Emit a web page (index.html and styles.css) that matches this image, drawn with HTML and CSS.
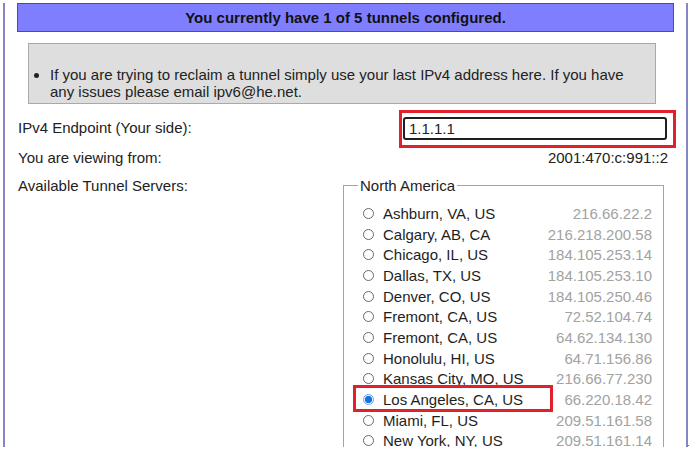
FILE: index.html
```html
<!DOCTYPE html>
<html>
<head>
<meta charset="utf-8">
<link rel="stylesheet" href="styles.css">
</head>
<body>
<div class="frame">
  <div class="banner">You currently have 1 of 5 tunnels configured.</div>
  <div class="notice">
    <ul>
      <li>If you are trying to reclaim a tunnel simply use your last IPv4 address here. If you have any issues please email ipv6@he.net.</li>
    </ul>
  </div>
  <div class="row row-endpoint">
    <label class="label" for="ipv4">IPv4 Endpoint (Your side):</label>
    <span class="input-wrap"><input id="ipv4" class="text-input" type="text" value="1.1.1.1"></span>
  </div>
  <div class="row row-viewing">
    <span class="label">You are viewing from:</span>
    <span class="value">2001:470:c:991::2</span>
  </div>
  <div class="row row-servers">
    <span class="label">Available Tunnel Servers:</span>
    <fieldset class="servers">
      <legend>North America</legend>
      <ul class="server-list">
        <li class="server"><label><input type="radio" name="srv"> Ashburn, VA, US</label><span class="ip">216.66.22.2</span></li>
        <li class="server"><label><input type="radio" name="srv"> Calgary, AB, CA</label><span class="ip">216.218.200.58</span></li>
        <li class="server"><label><input type="radio" name="srv"> Chicago, IL, US</label><span class="ip">184.105.253.14</span></li>
        <li class="server"><label><input type="radio" name="srv"> Dallas, TX, US</label><span class="ip">184.105.253.10</span></li>
        <li class="server"><label><input type="radio" name="srv"> Denver, CO, US</label><span class="ip">184.105.250.46</span></li>
        <li class="server"><label><input type="radio" name="srv"> Fremont, CA, US</label><span class="ip">72.52.104.74</span></li>
        <li class="server"><label><input type="radio" name="srv"> Fremont, CA, US</label><span class="ip">64.62.134.130</span></li>
        <li class="server"><label><input type="radio" name="srv"> Honolulu, HI, US</label><span class="ip">64.71.156.86</span></li>
        <li class="server"><label><input type="radio" name="srv"> Kansas City, MO, US</label><span class="ip">216.66.77.230</span></li>
        <li class="server selected"><label><input type="radio" name="srv" checked> Los Angeles, CA, US</label><span class="ip">66.220.18.42</span></li>
        <li class="server"><label><input type="radio" name="srv"> Miami, FL, US</label><span class="ip">209.51.161.58</span></li>
        <li class="server"><label><input type="radio" name="srv"> New York, NY, US</label><span class="ip">209.51.161.14</span></li>
      </ul>
    </fieldset>
  </div>
  <svg class="grip" width="9" height="7" viewBox="0 0 9 7"><path d="M8 1 L2 7 M8 4 L5 7" stroke="#777" stroke-width="1" fill="none"/></svg>
</div>
</body>
</html>
```

FILE: styles.css
```css
html, body {
  margin: 0;
  padding: 0;
  overflow: hidden;
  background: #ffffff;
}
body {
  font-family: "Liberation Sans", Arial, sans-serif;
  font-size: 15px;
  color: #222222;
}
.frame {
  position: relative;
  margin: 3px 4px 0 3px;
  height: 444px;
  border-left: 2px solid #8686c4;
  border-right: 2px solid #8686c4;
  box-sizing: border-box;
}
.banner {
  margin: 0 12px 0 12px;
  height: 29px;
  box-sizing: border-box;
  background: #7e7eff;
  border: 1px solid #4646c8;
  text-align: center;
  font-weight: bold;
  font-size: 15px;
  line-height: 27px;
  color: #111111;
}
.notice {
  margin: 11px 30px 0 23px;
  height: 61px;
  box-sizing: border-box;
  background: #dedede;
  border: 1px solid #a9a9a9;
  padding: 22px 20px 0 0;
}
.notice ul {
  margin: 0;
  padding-left: 21px;
  line-height: 17px;
}
.row {
  display: flex;
  justify-content: space-between;
  padding: 0 18px 0 13px;
}
.row-endpoint {
  align-items: center;
  padding-top: 13px;
  line-height: 17px;
}
.row-endpoint .label {
  margin-bottom: 3px;
}
.row-viewing {
  margin-top: 9px;
  line-height: 17px;
}
.row-servers {
  margin-top: 11px;
  align-items: flex-start;
  line-height: 17px;
}
.input-wrap {
  position: relative;
  display: block;
  margin-right: 1px;
}
.text-input {
  display: block;
  width: 264px;
  height: 23px;
  box-sizing: border-box;
  margin: 0;
  border: 2px solid #1f1f1f;
  border-radius: 3px;
  padding: 0 4px;
  font-family: "Liberation Sans", Arial, sans-serif;
  font-size: 15px;
  color: #222222;
  background: #ffffff;
}
.input-wrap::before {
  content: "";
  position: absolute;
  top: -7px;
  left: -4px;
  right: -9px;
  bottom: -8px;
  border: 3px solid #e0202a;
  pointer-events: none;
}
.servers {
  margin: 0 4px 0 0;
  width: 321px;
  box-sizing: border-box;
  border: 1px solid #a4a4a4;
  padding: 0 11px 10px 14px;
  min-width: 0;
}
.servers legend {
  padding: 0 2px;
  line-height: 17px;
  font-size: 15px;
  color: #222222;
}
.server-list {
  list-style: none;
  margin: 0;
  padding: 9px 0 0 0;
}
.server {
  position: relative;
  display: flex;
  justify-content: space-between;
  align-items: center;
  height: 20.7px;
  margin-left: -14px;
  padding-left: 19px;
}
.server label {
  display: flex;
  align-items: center;
  white-space: nowrap;
  font-size: 15px;
  color: #1e1e1e;
}
.server input[type="radio"] {
  -webkit-appearance: none;
  appearance: none;
  width: 11px;
  height: 11px;
  margin: 0 9px 0 0;
  box-sizing: border-box;
  border: 1px solid #6a6a6a;
  border-radius: 50%;
  background: #ffffff;
}
.server input[type="radio"]:checked {
  border: 1px solid #6aa2f0;
  background: radial-gradient(circle, #1273e6 0, #1273e6 3.4px, #e9f1fd 3.8px);
}
.ip {
  font-size: 15px;
  color: #a2a2a2;
}
.server.selected::after {
  content: "";
  position: absolute;
  left: 9px;
  top: -4px;
  width: 200px;
  height: 27px;
  box-sizing: border-box;
  border: 3px solid #e0202a;
  pointer-events: none;
}
.grip {
  position: absolute;
  right: -4px;
  bottom: -4px;
}
```
